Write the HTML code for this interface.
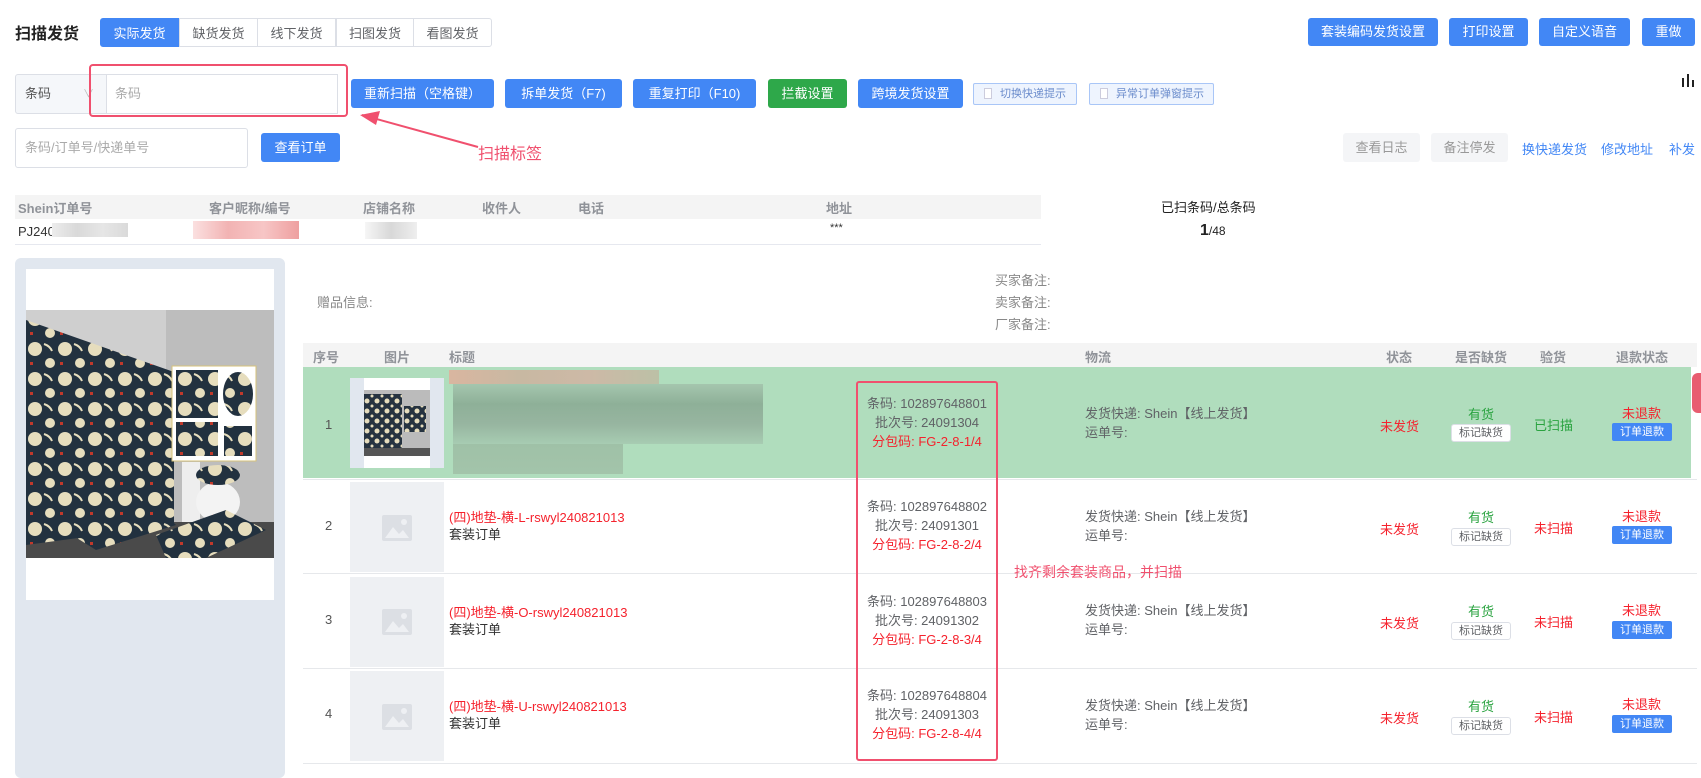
<!DOCTYPE html>
<html><head><meta charset="utf-8"><style>
*{box-sizing:border-box;margin:0;padding:0}
body{width:1701px;height:772px;overflow:hidden;background:#fff;font-family:"Liberation Sans","Noto Sans CJK SC",sans-serif;font-size:13px;color:#606266;position:relative}
.a{position:absolute}
.btn{position:absolute;background:#4287f5;color:#fff;border-radius:3px;text-align:center;font-size:13px}
.tab{position:absolute;top:18px;height:29px;line-height:29px;text-align:center;border:1px solid #dcdfe6;font-size:13px;color:#606266;background:#fff}
.hd{position:absolute;color:#909399;font-weight:bold;font-size:13px}
.red{color:#f5222d}
.grn{color:#2aa340}
.small{position:absolute;border:1px solid #dcdfe6;background:#fff;border-radius:3px;font-size:11px;text-align:center;height:18px;line-height:16px;width:60px;color:#606266}
.rb{position:absolute;background:#4287f5;color:#fff;border-radius:2px;font-size:11px;height:18px;line-height:18px;width:60px;text-align:center}
.ph{position:absolute;left:350px;width:94px;background:#eef0f3}
.ln{position:absolute;left:303px;width:1394px;height:1px;background:#e6e8eb}
</style></head><body>
<div class="a" style="left:15px;top:20px;font-size:16px;font-weight:bold;color:#222">扫描发货</div>
<div class="tab" style="left:100px;width:79px;background:#4287f5;color:#fff;border-color:#4287f5;border-radius:3px 0 0 3px">实际发货</div>
<div class="tab" style="left:179px;width:79px">缺货发货</div>
<div class="tab" style="left:257px;width:79px">线下发货</div>
<div class="tab" style="left:336px;width:78px">扫图发货</div>
<div class="tab" style="left:413px;width:79px;border-radius:0 3px 3px 0">看图发货</div>
<div class="btn" style="left:1308px;top:18px;width:130px;height:28px;line-height:28px">套装编码发货设置</div>
<div class="btn" style="left:1449px;top:18px;width:79px;height:28px;line-height:28px">打印设置</div>
<div class="btn" style="left:1539px;top:18px;width:91px;height:28px;line-height:28px">自定义语音</div>
<div class="btn" style="left:1642px;top:18px;width:53px;height:28px;line-height:28px">重做</div>

<div class="a" style="left:15px;top:74px;width:92px;height:40px;border:1px solid #dcdfe6;background:#f5f7fa;border-radius:3px 0 0 3px;line-height:38px;padding-left:9px;color:#555">条码<span style="position:absolute;left:67px;color:#bbb;font-size:11px">∨</span></div>
<div class="a" style="left:106px;top:74px;width:232px;height:40px;border:1px solid #dcdfe6;line-height:38px;padding-left:8px;color:#aaa;background:#fff">条码</div>
<div class="a" style="left:89px;top:64px;width:259px;height:53px;border:2px solid #f0506e;border-radius:4px"></div>
<div class="btn" style="left:351px;top:79px;width:143px;height:29px;line-height:29px">重新扫描（空格键）</div>
<div class="btn" style="left:505px;top:79px;width:117px;height:29px;line-height:29px">拆单发货（F7)</div>
<div class="btn" style="left:633px;top:79px;width:123px;height:29px;line-height:29px">重复打印（F10)</div>
<div class="btn" style="left:768px;top:79px;width:79px;height:29px;line-height:29px;background:#2ea84a">拦截设置</div>
<div class="btn" style="left:858px;top:79px;width:105px;height:29px;line-height:29px">跨境发货设置</div>
<div class="a" style="left:973px;top:83px;width:104px;height:22px;border:1px solid #a9c6f7;background:#eef4fe;border-radius:2px;font-size:11px;color:#6b8ccc;line-height:20px;padding-left:10px"><span style="display:inline-block;width:8px;height:11px;border:1px solid #ccd;background:#fff;vertical-align:-2px;margin-right:8px"></span>切换快递提示</div>
<div class="a" style="left:1089px;top:83px;width:125px;height:22px;border:1px solid #a9c6f7;background:#eef4fe;border-radius:2px;font-size:11px;color:#6b8ccc;line-height:20px;padding-left:10px"><span style="display:inline-block;width:8px;height:11px;border:1px solid #ccd;background:#fff;vertical-align:-2px;margin-right:8px"></span>异常订单弹窗提示</div>
<svg class="a" style="left:1680px;top:72px" width="16" height="16"><rect x="2" y="6" width="2" height="9" fill="#222"/><rect x="7" y="2" width="2" height="13" fill="#222"/><rect x="12" y="8" width="2" height="7" fill="#222"/></svg>

<svg class="a" style="left:350px;top:105px" width="140" height="50"><line x1="12" y1="10" x2="128" y2="42" stroke="#f0506e" stroke-width="2"/><polygon points="10,10 30,6 26,20" fill="#f0506e"/></svg>
<div class="a" style="left:478px;top:140px;font-size:16px;color:#f0506e">扫描标签</div>

<div class="a" style="left:15px;top:128px;width:233px;height:40px;border:1px solid #dcdfe6;border-radius:3px;line-height:38px;padding-left:9px;color:#aaa">条码/订单号/快递单号</div>
<div class="btn" style="left:261px;top:133px;width:79px;height:29px;line-height:29px">查看订单</div>
<div class="a" style="left:1343px;top:133px;width:77px;height:29px;line-height:29px;background:#f4f5f7;color:#999;text-align:center;border-radius:3px">查看日志</div>
<div class="a" style="left:1431px;top:133px;width:77px;height:29px;line-height:29px;background:#f4f5f7;color:#999;text-align:center;border-radius:3px">备注停发</div>
<div class="a" style="left:1522px;top:139px;color:#4287f5">换快递发货</div>
<div class="a" style="left:1601px;top:139px;color:#4287f5">修改地址</div>
<div class="a" style="left:1669px;top:139px;color:#4287f5">补发</div>

<div class="a" style="left:15px;top:195px;width:1026px;height:24px;background:#f4f4f4"></div>
<div class="hd" style="left:18px;top:198px">Shein订单号</div>
<div class="hd" style="left:209px;top:198px">客户昵称/编号</div>
<div class="hd" style="left:363px;top:198px">店铺名称</div>
<div class="hd" style="left:482px;top:198px">收件人</div>
<div class="hd" style="left:578px;top:198px">电话</div>
<div class="hd" style="left:826px;top:198px">地址</div>
<div class="a" style="left:18px;top:224px;color:#333">PJ240</div>
<div class="a" style="left:52px;top:223px;width:76px;height:14px;background:linear-gradient(90deg,#ececec,#d9d9d9,#e6e6e6,#dadada)"></div>
<div class="a" style="left:193px;top:221px;width:106px;height:18px;background:linear-gradient(90deg,#fbe0e0,#f2b3b3,#f7c6c6,#ee9f9f)"></div>
<div class="a" style="left:365px;top:222px;width:52px;height:17px;background:linear-gradient(90deg,#f6f6f6,#d8d8d8,#eee)"></div>
<div class="a" style="left:830px;top:222px;color:#333;font-size:11px">***</div>
<div class="a" style="left:15px;top:244px;width:1026px;height:1px;background:#e6e8ef"></div>
<div class="a" style="left:1161px;top:197px;color:#222">已扫条码/总条码</div>
<div class="a" style="left:1200px;top:222px;color:#222;font-size:12px"><b style="font-size:16px">1</b>/48</div>

<div class="a" style="left:15px;top:258px;width:270px;height:520px;background:#e1e7ef;border-radius:6px"></div>
<div class="a" style="left:26px;top:269px;width:248px;height:331px;background:#fff"></div>
<svg class="a" style="left:26px;top:310px" width="248" height="248">
<defs><pattern id="p" width="30" height="30" patternUnits="userSpaceOnUse"><rect width="30" height="30" fill="#22313f"/><circle cx="9" cy="9" r="7" fill="#e6ddbd"/><circle cx="24" cy="23" r="5" fill="#e6ddbd"/><path d="M18 4 q6 2 8 7" stroke="#e6ddbd" stroke-width="2" fill="none"/><rect x="4" y="22" width="3" height="3" fill="#c0392b"/></pattern></defs>
<rect width="248" height="248" fill="#cfcfcf"/><rect x="140" y="0" width="108" height="248" fill="#bdbdbd"/>
<rect x="0" y="212" width="248" height="36" fill="#4a4a4a"/>
<polygon points="0,10 148,62 148,215 0,235" fill="url(#p)"/>
<rect x="146" y="56" width="84" height="95" fill="#fff" stroke="#d6c27a"/>
<rect x="150" y="60" width="42" height="48" fill="url(#p)"/><ellipse cx="212" cy="84" rx="15" ry="22" fill="url(#p)"/>
<rect x="150" y="112" width="42" height="34" fill="url(#p)"/><rect x="198" y="116" width="28" height="30" fill="url(#p)"/>
<rect x="156" y="152" width="18" height="60" fill="#eee"/><ellipse cx="192" cy="192" rx="22" ry="20" fill="#f3f3f3"/><ellipse cx="192" cy="165" rx="22" ry="10" fill="url(#p)"/>
<polygon points="30,215 120,185 150,215 70,240" fill="url(#p)"/><polygon points="130,225 200,200 240,220 180,248 140,248" fill="url(#p)"/>
</svg>

<div class="a" style="left:317px;top:292px;color:#888">赠品信息:</div>
<div class="a" style="left:995px;top:270px;color:#888">买家备注:</div>
<div class="a" style="left:995px;top:292px;color:#888">卖家备注:</div>
<div class="a" style="left:995px;top:314px;color:#888">厂家备注:</div>

<div class="a" style="left:303px;top:343px;width:1394px;height:24px;background:#f4f4f4"></div>
<div class="hd" style="left:313px;top:347px">序号</div>
<div class="hd" style="left:384px;top:347px">图片</div>
<div class="hd" style="left:449px;top:347px">标题</div>
<div class="hd" style="left:1085px;top:347px">物流</div>
<div class="hd" style="left:1386px;top:347px">状态</div>
<div class="hd" style="left:1455px;top:347px">是否缺货</div>
<div class="hd" style="left:1540px;top:347px">验货</div>
<div class="hd" style="left:1616px;top:347px">退款状态</div>

<div class="a" style="left:303px;top:367px;width:1388px;height:111px;background:#b0ddbd"></div>
<div class="a" style="left:1692px;top:373px;width:12px;height:40px;background:#e85d70;border-radius:6px 0 0 6px"></div>
<div class="ln" style="top:479px"></div><div class="ln" style="top:573px"></div><div class="ln" style="top:668px"></div><div class="ln" style="top:763px"></div>

<div class="a" style="left:350px;top:378px;width:94px;height:90px;background:#e1e7ef"></div>
<svg class="a" style="left:364px;top:378px" width="66" height="90"><defs><pattern id="q" width="10" height="10" patternUnits="userSpaceOnUse"><rect width="10" height="10" fill="#263340"/><circle cx="3" cy="3" r="2.5" fill="#e6ddbd"/><circle cx="8" cy="8" r="1.5" fill="#e6ddbd"/></pattern></defs><rect width="66" height="90" fill="#fff"/><rect y="12" width="66" height="66" fill="#bbb"/><rect y="16" width="38" height="58" fill="url(#q)"/><rect x="40" y="28" width="22" height="26" fill="url(#q)"/><rect y="70" width="66" height="8" fill="#555"/></svg>
<div class="a" style="left:449px;top:370px;width:210px;height:14px;background:linear-gradient(90deg,#d9b6a0,#c8b8a2,#cdb9a6,#bcc0a6)"></div>
<div class="a" style="left:453px;top:384px;width:310px;height:60px;background:linear-gradient(180deg,#a5c6ae,#8eb098,#97b5a0,#a7ccb2)"></div>
<div class="a" style="left:453px;top:444px;width:170px;height:30px;background:linear-gradient(180deg,#9fc1a7,#a3c4aa)"></div>
<div class="a" style="left:325px;top:417px;color:#555">1</div>
<div class="a" style="left:856px;top:381px;width:142px;height:380px;border:2px solid #f0506e;border-radius:3px"></div>

<div class="a" style="left:860px;top:394px;width:134px;text-align:center;line-height:19px">条码: 102897648801<br>批次号: 24091304<br><span class="red">分包码: FG-2-8-1/4</span></div>
<div class="a" style="left:860px;top:497px;width:134px;text-align:center;line-height:19px">条码: 102897648802<br>批次号: 24091301<br><span class="red">分包码: FG-2-8-2/4</span></div>
<div class="a" style="left:860px;top:592px;width:134px;text-align:center;line-height:19px">条码: 102897648803<br>批次号: 24091302<br><span class="red">分包码: FG-2-8-3/4</span></div>
<div class="a" style="left:860px;top:686px;width:134px;text-align:center;line-height:19px">条码: 102897648804<br>批次号: 24091303<br><span class="red">分包码: FG-2-8-4/4</span></div>
<div class="a" style="left:1014px;top:562px;font-size:14px;color:#f0506e">找齐剩余套装商品，并扫描</div>

<div class="ph" style="top:482px;height:90px"></div>
<div class="ph" style="top:577px;height:90px"></div>
<div class="ph" style="top:671px;height:90px"></div>
<svg class="a" style="left:382px;top:515px" width="30" height="26"><rect width="30" height="26" rx="2" fill="#dcdfe4"/><path d="M3 23 L11 12 L17 19 L21 15 L27 23Z" fill="#eef0f3"/><circle cx="22" cy="7" r="3" fill="#eef0f3"/></svg>
<svg class="a" style="left:382px;top:609px" width="30" height="26"><rect width="30" height="26" rx="2" fill="#dcdfe4"/><path d="M3 23 L11 12 L17 19 L21 15 L27 23Z" fill="#eef0f3"/><circle cx="22" cy="7" r="3" fill="#eef0f3"/></svg>
<svg class="a" style="left:382px;top:704px" width="30" height="26"><rect width="30" height="26" rx="2" fill="#dcdfe4"/><path d="M3 23 L11 12 L17 19 L21 15 L27 23Z" fill="#eef0f3"/><circle cx="22" cy="7" r="3" fill="#eef0f3"/></svg>
<div class="a" style="left:325px;top:518px;color:#555">2</div>
<div class="a" style="left:325px;top:612px;color:#555">3</div>
<div class="a" style="left:325px;top:706px;color:#555">4</div>
<div class="a" style="left:449px;top:509px;line-height:17px"><span class="red">(四)地垫-横-L-rswyl240821013</span><br><span style="color:#333">套装订单</span></div>
<div class="a" style="left:449px;top:604px;line-height:17px"><span class="red">(四)地垫-横-O-rswyl240821013</span><br><span style="color:#333">套装订单</span></div>
<div class="a" style="left:449px;top:698px;line-height:17px"><span class="red">(四)地垫-横-U-rswyl240821013</span><br><span style="color:#333">套装订单</span></div>

<div class="a" style="left:1085px;top:404px;line-height:19px">发货快递: Shein【线上发货】<br>运单号:</div>
<div class="a" style="left:1085px;top:507px;line-height:19px">发货快递: Shein【线上发货】<br>运单号:</div>
<div class="a" style="left:1085px;top:601px;line-height:19px">发货快递: Shein【线上发货】<br>运单号:</div>
<div class="a" style="left:1085px;top:696px;line-height:19px">发货快递: Shein【线上发货】<br>运单号:</div>

<div class="a red" style="left:1380px;top:416px">未发货</div>
<div class="a red" style="left:1380px;top:519px">未发货</div>
<div class="a red" style="left:1380px;top:613px">未发货</div>
<div class="a red" style="left:1380px;top:708px">未发货</div>
<div class="a grn" style="left:1468px;top:404px">有货</div><div class="small" style="left:1451px;top:424px">标记缺货</div>
<div class="a grn" style="left:1468px;top:507px">有货</div><div class="small" style="left:1451px;top:528px">标记缺货</div>
<div class="a grn" style="left:1468px;top:601px">有货</div><div class="small" style="left:1451px;top:622px">标记缺货</div>
<div class="a grn" style="left:1468px;top:696px">有货</div><div class="small" style="left:1451px;top:717px">标记缺货</div>
<div class="a grn" style="left:1534px;top:415px">已扫描</div>
<div class="a red" style="left:1534px;top:518px">未扫描</div>
<div class="a red" style="left:1534px;top:612px">未扫描</div>
<div class="a red" style="left:1534px;top:707px">未扫描</div>
<div class="a red" style="left:1622px;top:403px">未退款</div><div class="rb" style="left:1612px;top:423px">订单退款</div>
<div class="a red" style="left:1622px;top:506px">未退款</div><div class="rb" style="left:1612px;top:526px">订单退款</div>
<div class="a red" style="left:1622px;top:600px">未退款</div><div class="rb" style="left:1612px;top:621px">订单退款</div>
<div class="a red" style="left:1622px;top:694px">未退款</div><div class="rb" style="left:1612px;top:715px">订单退款</div>
</body></html>
